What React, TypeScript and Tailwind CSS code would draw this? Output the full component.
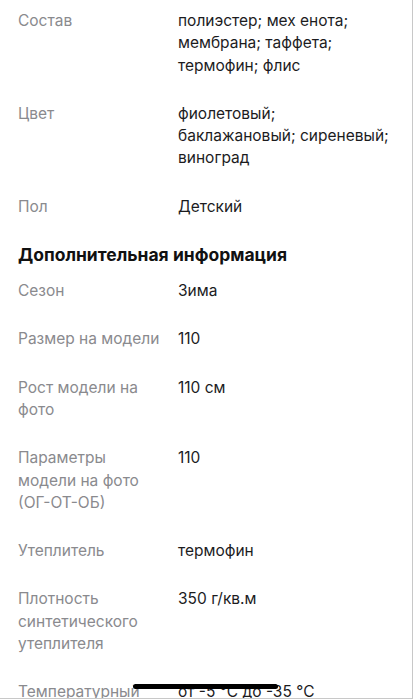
// label and value lines are split as in the source layout
const rows1: [string[], string[]][] = [
  [["Состав"], ["полиэстер; мех енота;", "мембрана; таффета;", "термофин; флис"]],
  [["Цвет"], ["фиолетовый;", "баклажановый; сиреневый;", "виноград"]],
  [["Пол"], ["Детский"]],
];

const rows2: [string[], string[]][] = [
  [["Сезон"], ["Зима"]],
  [["Размер на модели"], ["110"]],
  [["Рост модели на", "фото"], ["110 см"]],
  [["Параметры", "модели на фото", "(ОГ-ОТ-ОБ)"], ["110"]],
  [["Утеплитель"], ["термофин"]],
  [["Плотность", "синтетического", "утеплителя"], ["350 г/кв.м"]],
  [["Температурный", "режим"], ["от -5 °C до -35 °C"]],
];

function Lines({ lines }: { lines: string[] }) {
  return (
    <>
      {lines.map((line) => (
        <div key={line} className="whitespace-nowrap">
          {line}
        </div>
      ))}
    </>
  );
}

function Row({ label, value }: { label: string[]; value: string[] }) {
  return (
    <div className="flex">
      <div className="w-[160px] shrink-0 pr-[8px] text-[#8a8a8e]">
        <Lines lines={label} />
      </div>
      <div className="flex-1 text-[#1c1c1e]">
        <Lines lines={value} />
      </div>
    </div>
  );
}

export default function App() {
  return (
    <div
      className="relative w-[413px] h-[699px] overflow-hidden bg-white border-r border-b border-[#c8c8c8]"
      style={{ fontFamily: "Inter, 'Noto Sans', sans-serif" }}
    >
      <div className="pl-[18px] pr-[14px] pt-[10px] text-[15.5px] leading-[22.3px]">
        <div className="flex flex-col gap-[26px]">
          {rows1.map(([l, v]) => (
            <Row key={l[0]} label={l} value={v} />
          ))}
        </div>

        <h2 className="mt-[25px] mb-[13px] text-[17.5px] leading-[24px] font-bold text-[#111]">
          Дополнительная информация
        </h2>

        <div className="flex flex-col gap-[26px]">
          {rows2.map(([l, v]) => (
            <Row key={l[0]} label={l} value={v} />
          ))}
        </div>
      </div>

      {/* home indicator */}
      <div className="absolute left-[133px] top-[684px] w-[145px] h-[5px] rounded-full bg-black" />
    </div>
  );
}
